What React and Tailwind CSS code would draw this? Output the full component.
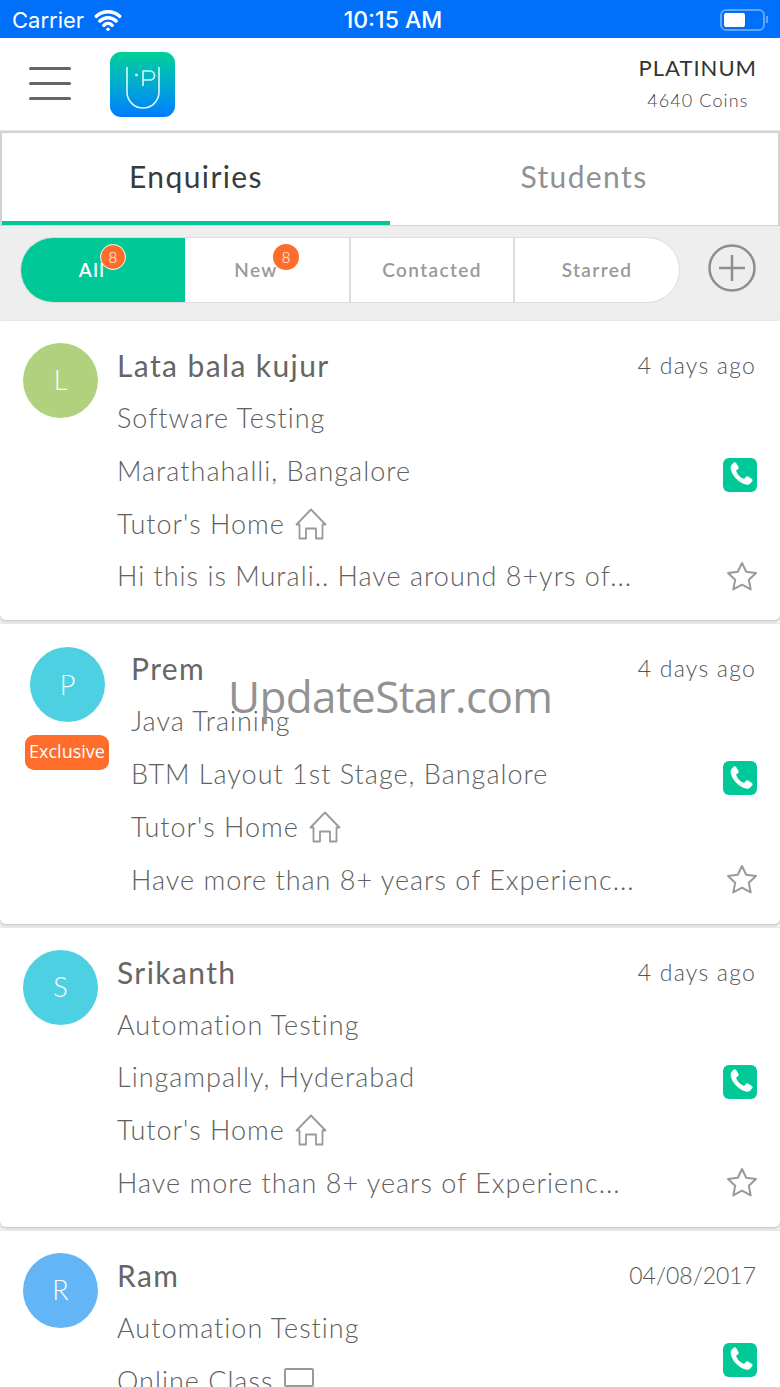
import React from 'react';
import { Wifi } from 'lucide-react';

const enquiries = [
    { initial: 'L', color: 'bg-[#b0d27e]', name: 'Lata bala kujur', time: '4 days ago', course: 'Software Testing', place: 'Marathahalli, Bangalore', mode: "Tutor's Home", note: 'Hi this is Murali.. Have around 8+yrs of...' },
    { initial: 'P', color: 'bg-[#4dd0e1]', name: 'Prem', time: '4 days ago', course: 'Java Training', place: 'BTM Layout 1st Stage, Bangalore', mode: "Tutor's Home", note: 'Have more than 8+ years of Experienc...', exclusive: true },
    { initial: 'S', color: 'bg-[#4dd0e1]', name: 'Srikanth', time: '4 days ago', course: 'Automation Testing', place: 'Lingampally, Hyderabad', mode: "Tutor's Home", note: 'Have more than 8+ years of Experienc...' },
    { initial: 'R', color: 'bg-[#64b5f6]', name: 'Ram', time: '04/08/2017', course: 'Automation Testing', place: 'Online Class', online: true, mode: '', note: '' },
];

function HomeIcon() {
    return (
        <svg width="32" height="32" viewBox="0 0 32 32" fill="none" stroke="#9a9a9a" strokeWidth="1.8" strokeLinejoin="round" className="ml-[10px]">
            <path d="M16 1.5 L1.5 16.5 L4.5 16.5 L4.5 30.5 L11 30.5 L11 20.5 L21 20.5 L21 30.5 L27.5 30.5 L27.5 16.5 L30.5 16.5 Z" />
        </svg>
    );
}

function PhoneButton({ online }) {
    return (
        <div className={`w-[34px] h-[34px] rounded-[6px] bg-[#00c896] flex items-center justify-center -mr-[1px] ${online ? '-translate-y-[21px]' : 'translate-y-[4px]'}`}>
            <svg width="27" height="27" viewBox="0 0 24 24" fill="white" stroke="white" strokeWidth="0.5">
                <path d="M6.3 1.6c.6-.4 1.3-.2 1.7.4l2 3.4c.3.6.2 1.2-.3 1.6L8.2 8.2c-.3.3-.4.6-.2 1 .6 1.6 1.5 3 2.6 4.2 1.2 1.2 2.6 2 4.1 2.6.4.1.7.1 1-.2l1.2-1.5c.4-.5 1-.6 1.6-.3l3.4 2c.6.4.8 1.1.4 1.7-1 1.7-2.6 3.3-4.6 3.1-3.4-.4-6.7-2.4-9.3-5-2.6-2.7-4.5-6-4.9-9.4C3.3 4.2 4.7 2.6 6.3 1.6z" />
            </svg>
        </div>
    );
}

function StarIcon() {
    return (
        <svg width="32" height="30" viewBox="0 0 32 30" fill="none" stroke="#9a9a9a" strokeWidth="2" strokeLinejoin="round" className="-mr-[2px] -translate-y-[1px]">
            <path d="M16 2 L20.2 10.8 L30 12.1 L22.8 18.8 L24.7 28.4 L16 23.7 L7.3 28.4 L9.2 18.8 L2 12.1 L11.8 10.8 Z" />
        </svg>
    );
}

function Card({ item }) {
    return (
        <div className="bg-white h-[299.33px] mb-[4px] pt-[18px] rounded-b-[6px] shadow-[0_1px_3px_rgba(0,0,0,0.22)] flex overflow-hidden shrink-0">
            <div className={item.exclusive ? 'w-[131px] pl-[25px] pt-[5px] shrink-0' : 'w-[117px] pl-[23px] pt-[4px] shrink-0'}>
                <div className={`w-[75px] h-[75px] rounded-full ${item.color} text-white flex items-center justify-center text-[27px] font-light ${item.exclusive ? 'ml-[5px]' : ''}`}>
                    {item.initial}
                </div>
                {item.exclusive && (
                    <div className="w-[84px] h-[35px] mt-[13px] pb-[2px] rounded-[9px] bg-[#ff6d2d] text-white text-[18px] flex items-center justify-center font-['Open_Sans',sans-serif]">
                        Exclusive
                    </div>
                )}
            </div>
            <div className="flex-1 min-w-0 pr-[24px] text-[#606060] text-[27px] tracking-[1px] font-light">
                <div className="h-[52.8px] flex items-center justify-between">
                    <span className="text-[30px] tracking-[1.4px] font-normal text-[#666]">{item.name}</span>
                    <span className={`text-[23px] font-light text-[#555] ${item.online ? 'tracking-[0px]' : 'tracking-[1.2px]'}`}>{item.time}</span>
                </div>
                <div className="h-[52.8px] flex items-center">{item.course}</div>
                <div className="h-[52.8px] flex items-center justify-between">
                    <span className="flex items-center">
                        {item.place}
                        {item.online && <span className="w-[30px] h-[19px] ml-[11px] -translate-y-[3px] border-2 border-[#9a9a9a] rounded-[2px]" />}
                    </span>
                    <PhoneButton online={item.online} />
                </div>
                {item.mode && (
                    <div className="h-[52.8px] flex items-center">
                        {item.mode}
                        <HomeIcon />
                    </div>
                )}
                {item.note && (
                    <div className="h-[52.8px] flex items-center justify-between whitespace-nowrap">
                        <span>{item.note}</span>
                        <StarIcon />
                    </div>
                )}
            </div>
        </div>
    );
}

function Badge({ ring }) {
    return (
        <span className={`absolute w-[26px] h-[26px] rounded-full bg-[#ff6d2d] text-white text-[15px] font-light tracking-normal flex items-center justify-center ${ring ? 'border border-white -top-[12px] left-[21px]' : '-top-[12px] left-[39px]'}`}>
            8
        </span>
    );
}

function App() {
    return (
        <div className="w-[780px] h-[1387px] overflow-hidden relative bg-[#f0f0f0] flex flex-col font-['Lato',sans-serif]">
            {/* status bar */}
            <div className="h-[38px] shrink-0 bg-[#0070fb] text-white flex items-center justify-between px-[12px] pt-[3px] font-['Inter',sans-serif] text-[22px]">
                <div className="flex items-center w-[200px] gap-[10px]">
                    <span>Carrier</span>
                    <Wifi size={28} strokeWidth={3} className="-translate-y-[1px]" />
                </div>
                <span className="font-medium text-[23px] ml-[6px]">10:15 AM</span>
                <div className="w-[200px] flex justify-end items-center -translate-y-[1px]">
                    <div className="w-[45px] h-[22px] rounded-[6px] border-2 border-[#5da5fd] p-[2px]">
                        <div className="w-[21px] h-full bg-white rounded-[2px]" />
                    </div>
                    <div className="w-[2px] h-[7px] bg-[#5da5fd] ml-[1px]" />
                </div>
            </div>

            {/* header */}
            <div className="h-[93px] shrink-0 bg-white flex items-center pl-[29px] pr-[23px] border-b-[1px] border-[#e8e8e8]">
                <div className="flex flex-col gap-[12px] w-[42px] mb-[1px]">
                    <div className="h-[3px] rounded-full bg-[#666]" />
                    <div className="h-[3px] rounded-full bg-[#666]" />
                    <div className="h-[3px] rounded-full bg-[#666]" />
                </div>
                <div className="ml-[39px] w-[65px] h-[65px] rounded-[11px] bg-gradient-to-b from-[#00d095] to-[#007aff] flex items-center justify-center">
                    <svg width="36" height="44" viewBox="0 0 36 44" fill="none" stroke="#d8f7f5" strokeWidth="1.6" className="mt-[7px]">
                        <path d="M2 1 V26 A16 16 0 0 0 34 26 V1" />
                        <path d="M18 20 V5 H25 A4.5 4.5 0 0 1 25 14 H18" />
                        <circle cx="11.5" cy="9" r="0.6" />
                    </svg>
                </div>
                <div className="ml-auto flex flex-col items-center mb-[3px]">
                    <span className="text-[22px] tracking-[1px] text-[#333]">PLATINUM</span>
                    <span className="text-[18px] tracking-[1.1px] font-light text-[#444] mt-[3px]">4640 Coins</span>
                </div>
            </div>

            {/* tabs */}
            <div className="h-[95px] shrink-0 flex bg-white border-[2px] border-[#d2d2d2] border-b-[1px] text-[30px] tracking-[1.4px]">
                <div className="w-[388px] border-b-[4px] border-[#00c896] flex items-center justify-center text-[#3a3a3a] pb-[2px]">Enquiries</div>
                <div className="flex-1 flex items-center justify-center text-[#919191] pb-[6px]">Students</div>
            </div>

            {/* filters */}
            <div className="h-[95px] shrink-0 bg-[#eeeeee] flex items-center pl-[20px] pb-[7px]">
                <div className="w-[660px] h-[66px] flex rounded-full bg-white border border-[#dcdcdc] text-[19px] font-semibold tracking-[1.4px] text-[#999]">
                    <div className="w-[164px] bg-[#00c896] rounded-l-full text-white flex items-center justify-center pr-[22px]">
                        <span className="relative">All<Badge ring /></span>
                    </div>
                    <div className="w-[166px] flex items-center justify-center border-r-2 border-[#dcdcdc] pr-[22px]">
                        <span className="relative">New<Badge /></span>
                    </div>
                    <div className="w-[164px] flex items-center justify-center border-r-2 border-[#dcdcdc]">Contacted</div>
                    <div className="flex-1 flex items-center justify-center">Starred</div>
                </div>
                <svg width="48" height="48" viewBox="0 0 48 48" fill="none" stroke="#8e8e8e" strokeWidth="2.5" className="ml-[28px] mb-[4px]">
                    <circle cx="24" cy="24" r="22.5" />
                    <path d="M24 11 V37 M11 24 H37" />
                </svg>
            </div>

            {/* enquiry list */}
            <div className="flex-1 min-h-0 flex flex-col">
                {enquiries.map((item) => <Card key={item.name} item={item} />)}
            </div>

            {/* overlay watermark */}
            <div className="absolute left-[228px] top-[668px] text-[44px] leading-[56px] font-normal text-[#929292] tracking-[-0.6px] font-['Open_Sans',sans-serif]">
                UpdateStar.com
            </div>
        </div>
    );
}

export default App;
